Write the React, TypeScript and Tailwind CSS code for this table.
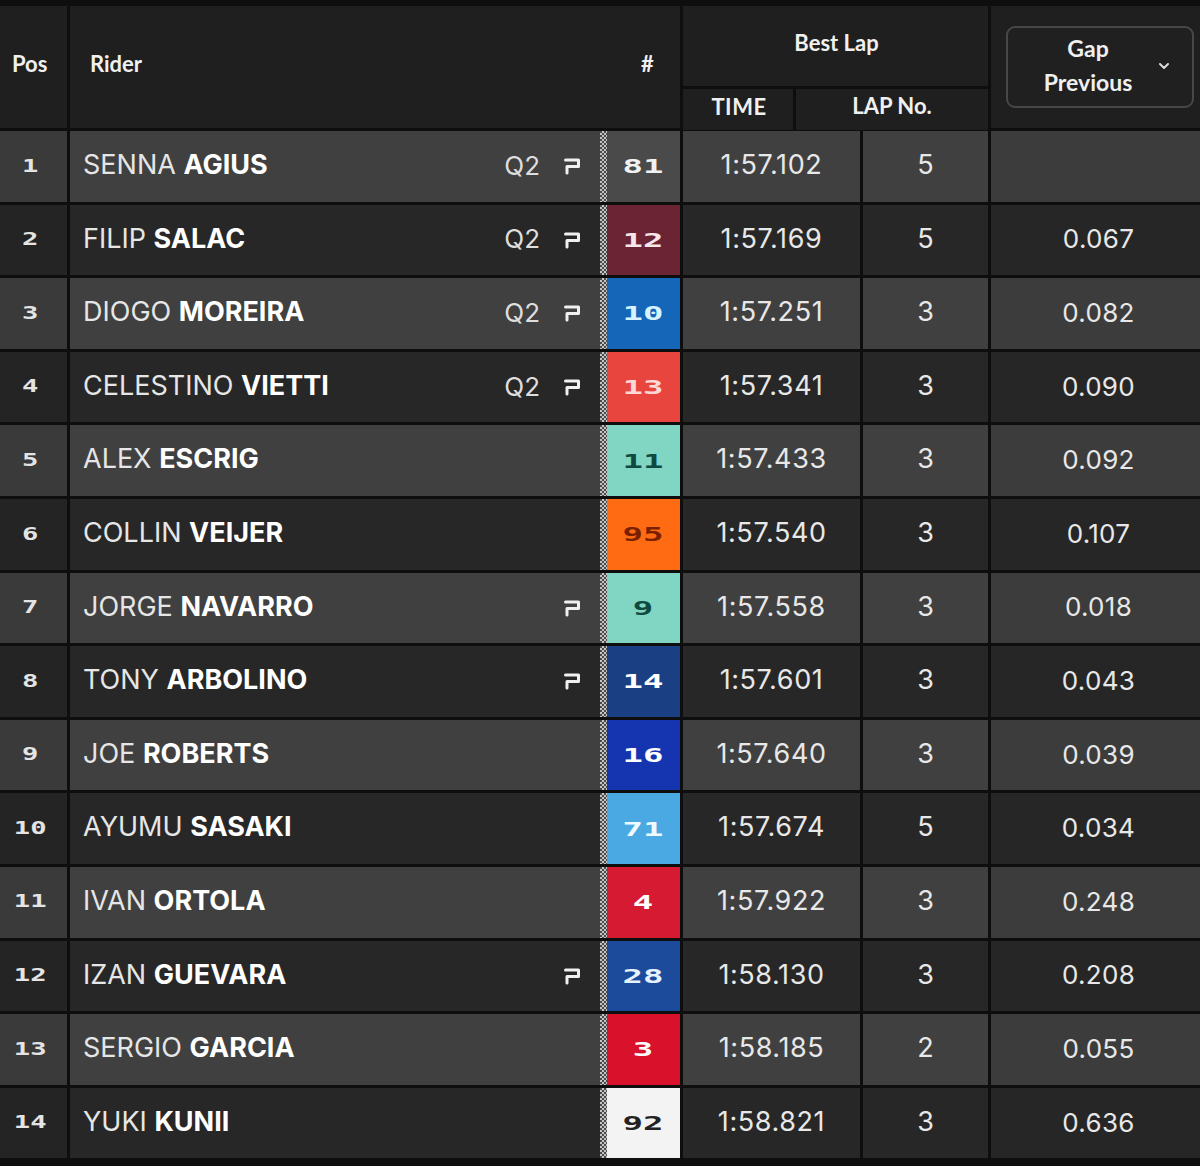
import { ChevronDown } from "lucide-react";

type Row = {
  pos: number;
  first: string;
  last: string;
  q2?: boolean;
  p?: boolean;
  num: string;
  bg: string;
  fg: string;
  time: string;
  lap: string;
  gap: string;
};

const rows: Row[] = [
  { pos: 1, first: "SENNA", last: "AGIUS", q2: true, p: true, num: "81", bg: "bg-[#4a4a4a]", fg: "text-[#f2f2f2]", time: "1:57.102", lap: "5", gap: "" },
  { pos: 2, first: "FILIP", last: "SALAC", q2: true, p: true, num: "12", bg: "bg-[#6b2433]", fg: "text-[#f6e6e9]", time: "1:57.169", lap: "5", gap: "0.067" },
  { pos: 3, first: "DIOGO", last: "MOREIRA", q2: true, p: true, num: "10", bg: "bg-[#1565b8]", fg: "text-[#d6f3ff]", time: "1:57.251", lap: "3", gap: "0.082" },
  { pos: 4, first: "CELESTINO", last: "VIETTI", q2: true, p: true, num: "13", bg: "bg-[#e8453f]", fg: "text-[#ffd9d6]", time: "1:57.341", lap: "3", gap: "0.090" },
  { pos: 5, first: "ALEX", last: "ESCRIG", num: "11", bg: "bg-[#80d5c3]", fg: "text-[#0e4a3f]", time: "1:57.433", lap: "3", gap: "0.092" },
  { pos: 6, first: "COLLIN", last: "VEIJER", num: "95", bg: "bg-[#ff6b12]", fg: "text-[#7a1f00]", time: "1:57.540", lap: "3", gap: "0.107" },
  { pos: 7, first: "JORGE", last: "NAVARRO", p: true, num: "9", bg: "bg-[#80d5c3]", fg: "text-[#0e4a3f]", time: "1:57.558", lap: "3", gap: "0.018" },
  { pos: 8, first: "TONY", last: "ARBOLINO", p: true, num: "14", bg: "bg-[#1b3f83]", fg: "text-[#ffffff]", time: "1:57.601", lap: "3", gap: "0.043" },
  { pos: 9, first: "JOE", last: "ROBERTS", num: "16", bg: "bg-[#1434b0]", fg: "text-[#ffffff]", time: "1:57.640", lap: "3", gap: "0.039" },
  { pos: 10, first: "AYUMU", last: "SASAKI", num: "71", bg: "bg-[#4aa8e2]", fg: "text-[#eefaff]", time: "1:57.674", lap: "5", gap: "0.034" },
  { pos: 11, first: "IVAN", last: "ORTOLA", num: "4", bg: "bg-[#d61a31]", fg: "text-[#ffffff]", time: "1:57.922", lap: "3", gap: "0.248" },
  { pos: 12, first: "IZAN", last: "GUEVARA", p: true, num: "28", bg: "bg-[#1d4b9c]", fg: "text-[#e6f2ff]", time: "1:58.130", lap: "3", gap: "0.208" },
  { pos: 13, first: "SERGIO", last: "GARCIA", num: "3", bg: "bg-[#d9112b]", fg: "text-[#ffffff]", time: "1:58.185", lap: "2", gap: "0.055" },
  { pos: 14, first: "YUKI", last: "KUNII", num: "92", bg: "bg-[#f3f3f3]", fg: "text-[#222222]", time: "1:58.821", lap: "3", gap: "0.636" },
];

function PIcon() {
  return (
    <svg width="18" height="18" viewBox="0 0 18 18" fill="none">
      <path d="M2.5 3 H15.5 V9.5 H4 V16" stroke="#f0f0f0" strokeWidth="3" strokeLinejoin="round" strokeLinecap="round" />
    </svg>
  );
}

function DataRow({ r, odd }: { r: Row; odd: boolean }) {
  const cell = odd ? "bg-[#404040]" : "bg-[#272727]";
  const posCell = odd ? "bg-[#3a3a3a]" : "bg-[#242424]";
  return (
    <div className="grid grid-cols-[67px_610px_177px_125px_1fr] gap-x-[3px] h-[70.6px]">
      <div className={`${posCell} flex items-center justify-center pr-[6px] text-[#e4e4e4]`}>
        <span className="inline-block scale-x-[1.6] font-bold text-[17px] font-['DejaVu_Sans_Mono',monospace]">{r.pos}</span>
      </div>
      <div className={`${cell} flex items-center`}>
        <div className="flex-1 pl-[13px] pb-[2px] text-[27px] text-[#e6e6e6] whitespace-nowrap">
          <span className="font-normal">{r.first} </span>
          <span className="font-bold text-white">{r.last}</span>
        </div>
        <div className="w-[40px] pb-[2px] text-right text-[26px] text-[#dedede]">{r.q2 ? "Q2" : ""}</div>
        <div className="w-[18px] ml-[23px] flex items-center">{r.p ? <PIcon /> : null}</div>
        <div className="ml-[19px] w-[7px] self-stretch bg-[repeating-conic-gradient(#c4c4c4_0%_25%,#4a4a4a_0%_50%)] bg-[length:4px_4px]" />
        <div className={`w-[73px] self-stretch flex items-center justify-center ${r.bg} ${r.fg}`}>
          <span className="inline-block scale-x-[1.7] font-bold text-[20px] font-['DejaVu_Sans_Mono',monospace]">{r.num}</span>
        </div>
      </div>
      <div className={`${cell} flex items-center justify-center pb-[2px] text-[27px] text-[#e8e8e8] tracking-[0.6px]`}>{r.time}</div>
      <div className={`${cell} flex items-center justify-center pb-[2px] text-[27px] text-[#e8e8e8]`}>{r.lap}</div>
      <div className={`${odd ? "bg-[#3c3c3c]" : "bg-[#262626]"} flex items-center justify-center pl-[6px] pb-[2px] text-[26px] text-[#e8e8e8] tracking-[0.3px]`}>{r.gap}</div>
    </div>
  );
}

export default function App() {
  return (
    <div className="w-[1200px] h-[1166px] bg-[#0e0e0e] pt-[6px] font-['Inter',sans-serif] overflow-hidden">
      <div className="grid grid-cols-[67px_610px_305px_1fr] gap-x-[3px] h-[122px] font-['Lato',sans-serif] font-bold text-[#f0f0f0]">
        <div className="bg-[#1f1f1f] flex items-center pl-[12px] pb-[7px] text-[22px]">Pos</div>
        <div className="bg-[#1f1f1f] flex items-center pb-[7px]">
          <span className="flex-1 pl-[20px] text-[22px]">Rider</span>
          <span className="w-[73px] pl-[8px] text-center text-[22px]">#</span>
        </div>
        <div className="flex flex-col gap-[3px]">
          <div className="flex-1 bg-[#1f1f1f] flex items-center justify-center pb-[8px] pl-[2px] text-[22px]">Best Lap</div>
          <div className="h-[39px] grid grid-cols-[110px_1fr] gap-x-[3px]">
            <div className="bg-[#1f1f1f] flex items-center justify-center pl-[2px] pb-[6px] text-[22px] tracking-[0.5px]">TIME</div>
            <div className="bg-[#1f1f1f] flex items-center justify-center pb-[8px] text-[22px]">LAP No.</div>
          </div>
        </div>
        <div className="bg-[#1f1f1f] flex items-center pl-[15px] pr-[6px]">
          <div className="w-[188px] h-[82px] rounded-[9px] border-2 border-[#474747] bg-[#202020] flex items-center">
            <div className="flex-1 flex flex-col items-center leading-[34px] text-[23px] pl-[12px] pb-[5px]">
              <span>Gap</span>
              <span>Previous</span>
            </div>
            <ChevronDown size={16} strokeWidth={3} className="text-[#dcdcdc] mr-[20px] mt-[-2px]" />
          </div>
        </div>
      </div>
      <div className="flex flex-col gap-[3px] mt-[3px]">
        {rows.map((r, i) => (
          <DataRow key={r.pos} r={r} odd={i % 2 === 0} />
        ))}
      </div>
    </div>
  );
}
